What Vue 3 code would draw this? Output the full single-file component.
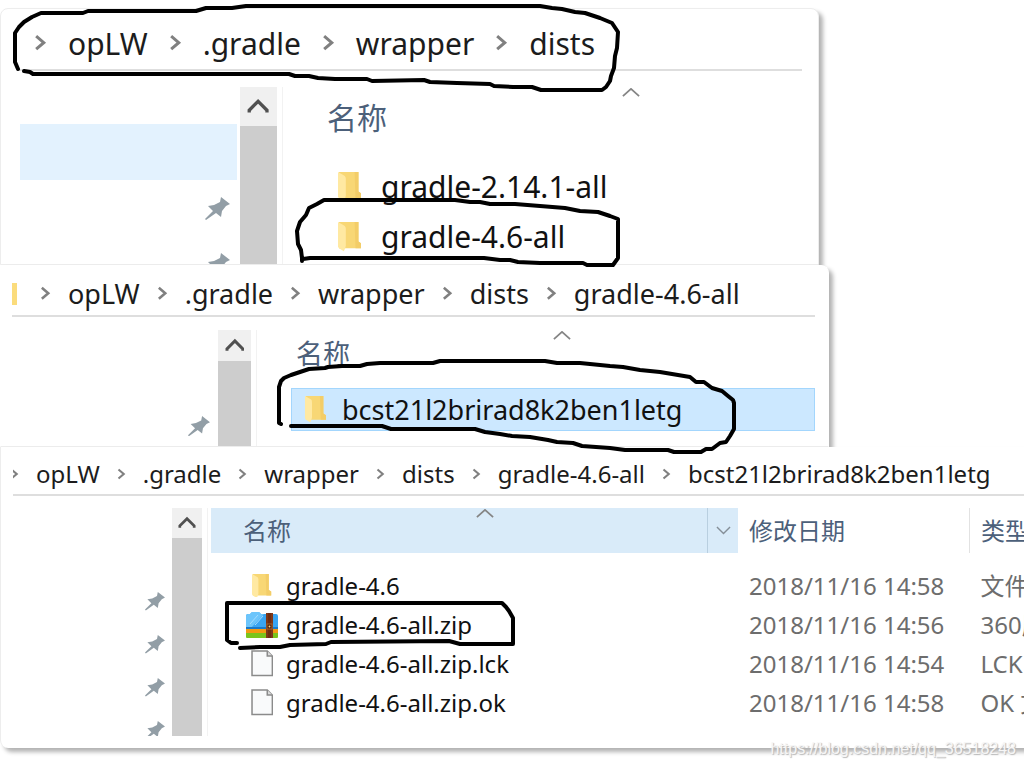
<!--
  Walkthrough of the gradle wrapper folders: three explorer windows stacked on each other, with pen marks over the entries that matter.
-->

<script setup lang="js">
import {ref} from "vue";

const windows = ref([
    {
        name: "dists",
        cutFolder: false,
        path: ["opLW", ".gradle", "wrapper", "dists"],
        pins: [{hover: true, pin: false}, {pin: true}, {pin: true}],
        columns: ["名称"],
        files: [
            {icon: "folder", cells: ["gradle-2.14.1-all"]},
            {icon: "folder", cells: ["gradle-4.6-all"]}
        ]
    },
    {
        name: "version",
        cutFolder: true,
        path: ["opLW", ".gradle", "wrapper", "dists", "gradle-4.6-all"],
        pins: [{pin: true}],
        columns: ["名称"],
        files: [
            {icon: "folder", selected: true, cells: ["bcst21l2brirad8k2ben1letg"]}
        ]
    },
    {
        name: "hash",
        cutFolder: false,
        path: ["opLW", ".gradle", "wrapper", "dists", "gradle-4.6-all", "bcst21l2brirad8k2ben1letg"],
        pins: [{pin: true}, {pin: true}, {pin: true}, {pin: true}],
        columns: ["名称", "修改日期", "类型"],
        files: [
            {icon: "folder", cells: ["gradle-4.6", "2018/11/16 14:58", "文件夹"]},
            {icon: "zip", cells: ["gradle-4.6-all.zip", "2018/11/16 14:56", "360压缩"]},
            {icon: "file", cells: ["gradle-4.6-all.zip.lck", "2018/11/16 14:54", "LCK 文件"]},
            {icon: "file", cells: ["gradle-4.6-all.zip.ok", "2018/11/16 14:58", "OK 文件"]}
        ]
    }
])

// pen strokes, in page coordinates
const marks = [
    "M18 69L15 62V33L19 27L24 22L32 17L41 13H83L88 11H196L206 8H232L246 6H540L552 8L562 9L575 12L585 13L600 18L612 23L618 32L617 48L615 56L614 68L611 76L610 81L606 87L602 90H541L532 87H513L494 86L490 84L457 83L430 82L424 80L372 81L367 79H335L318 78L309 76H295L289 74H40L33 74L30 72L24 71",
    "M302 261V258L301 250L298 244L297 231L300 222L306 215L309 208L317 204L324 200H455L470 202H480L490 204H515L540 206L565 208L580 211L598 212L610 216L618 219V258L613 265H587L583 263L540 263L518 262L510 260H500L484 258H310L303 259",
    "M281 424L279 423V387L281 381L284 378L291 375L297 373L309 369L325 368L328 367L342 366H360L367 364L380 363H433L440 361H545L557 363H580L610 366L623 367L640 370L660 372L690 377L696 382H704L712 388L722 391L728 396L733 400L734 403V429L730 436L726 442L720 443L712 449H706L701 452H674L668 450H625L610 448L582 446L573 443L557 442L548 440L530 437L512 436L500 434L485 432L475 429H391L382 426H291",
    "M237 643H231L227 640V603H502L506 607L509 611L513 618V644H460L449 641L331 642L326 644L290 645L280 647H260L240 648"
]
</script>

<template>
    <main class="page">
        <section v-for="win in windows" :key="win.name" class="window" :class="win.name">
            <nav class="crumbs">
                <span v-if="win.cutFolder" class="cut-folder"></span>
                <template v-for="part in win.path" :key="part">
                    <svg class="chevron" viewBox="0 0 12 16" aria-hidden="true">
                        <path d="M2 2L9 8L2 14"/>
                    </svg>
                    <a href="#">{{ part }}</a>
                </template>
            </nav>
            <div class="body">
                <ul class="tree">
                    <li v-for="(row, index) in win.pins" :key="index" :class="{ 'hover': row.hover }">
                        <svg v-if="row.pin" class="pin" viewBox="0 0 25 23" aria-hidden="true">
                            <path d="M16 0L25 7L21 9L17 14L16 20L11 16L1 23L0 22L8 14L3 9L9 8L15 5Z"/>
                        </svg>
                    </li>
                </ul>
                <div class="scrollbar">
                    <button type="button" aria-label="Scroll up">
                        <svg viewBox="0 0 20 16" aria-hidden="true">
                            <path d="M2 13V11L10 3L18 11V13"/>
                        </svg>
                    </button>
                    <div class="thumb"></div>
                </div>
                <div class="list">
                    <svg class="sort" viewBox="0 0 20 10" aria-hidden="true">
                        <path d="M1 9L10 1L19 9"/>
                    </svg>
                    <table>
                        <thead>
                            <tr>
                                <th v-for="(column, index) in win.columns" :key="column" scope="col">
                                    <div class="head">
                                        <span>{{ column }}</span>
                                        <button v-if="win.columns.length > 1 && index === 0" type="button" aria-label="Filter">
                                            <svg viewBox="0 0 16 10" aria-hidden="true">
                                                <path d="M1 1L8 8L15 1"/>
                                            </svg>
                                        </button>
                                    </div>
                                </th>
                            </tr>
                        </thead>
                        <tbody>
                            <tr v-for="file in win.files" :key="file.cells[0]" :class="{ 'selected': file.selected }">
                                <td v-for="(cell, index) in file.cells" :key="index">
                                    <div v-if="index === 0" class="name">
                                        <span class="icon">
                                            <svg v-if="file.icon === 'folder'" class="folder" viewBox="0 0 24 30" aria-hidden="true">
                                                <path d="M1 0H21V20L24 22V27H5Z" fill="#f8d775"/>
                                                <path d="M17 0H21V20L24 22V27H18Z" fill="#f3cd68"/>
                                                <path d="M0 0L7 4Q8 5 8 7V24Q8 26 6 30L1 27Q0 26 0 25Z" fill="#ffe9a2"/>
                                            </svg>
                                            <svg v-else-if="file.icon === 'zip'" class="zip" viewBox="0 0 32 26" aria-hidden="true">
                                                <rect x="0" y="19" width="32" height="7" rx="1" fill="#7ac41c"/>
                                                <rect x="0" y="15" width="32" height="6" fill="#f39a12"/>
                                                <path d="M0 4Q0 2 2 2H4L6 0H13L15 2H30Q32 2 32 4V17H0Z" fill="#3aa5f2"/>
                                                <path d="M0 4Q0 2 2 2H4L6 0H13L15 2H18L4 17H0Z" fill="#6cc5fb"/>
                                                <path d="M0 15H32V17H0Z" fill="#1b79c8"/>
                                                <path d="M4 12L12 3M9 13L17 4" stroke="#a3dcff"/>
                                                <rect x="20" y="1" width="7" height="25" fill="#6e2d12"/>
                                                <path d="M21 1V26M26 1V26" stroke="#8d4520"/>
                                                <rect x="21" y="12" width="5" height="5" fill="#4a1c0c" stroke="#a8672f"/>
                                                <circle cx="23.5" cy="14.5" r="1" fill="#ffd77a"/>
                                            </svg>
                                            <svg v-else class="file" viewBox="0 0 22 26" aria-hidden="true">
                                                <path d="M1 1H16L21 6V25H1Z" fill="#f9fafb" stroke="#8b8b8b" stroke-width="1.5"/>
                                                <path d="M16 1V6H21" fill="#ddd" stroke="#8b8b8b" stroke-width="1.5"/>
                                            </svg>
                                        </span>
                                        <span>{{ cell }}</span>
                                    </div>
                                    <template v-else>{{ cell }}</template>
                                </td>
                            </tr>
                        </tbody>
                    </table>
                </div>
            </div>
        </section>
        <svg class="marks" viewBox="0 0 1024 768" aria-hidden="true">
            <path v-for="mark in marks" :key="mark" :d="mark"/>
        </svg>
        <p class="watermark">https://blog.csdn.net/qq_36518248</p>
    </main>
</template>

<style>
body {
    margin: 0;
    background: #fff;
}
</style>

<style scoped>
.page {
    position: relative;
    overflow: hidden;
    min-height: 100vh;
    padding-top: 8px;
    box-sizing: border-box;
    font-family: 'Noto Sans', 'Noto Sans CJK SC', sans-serif;
    color: #1c1c1c;
}
.window {
    box-sizing: border-box;
    border: 1px solid #ededed;
    background: #fff;
    box-shadow: 4px 4px 4px rgba(0, 0, 0, 0.3);
    font-size: var(--text);
}
.dists {
    --text: 30px;
    --chevron: 13px;
    --pin: 25px;
    --row: 50px;
    --slot: 39px;
    --gap: 12px;
    --lead: 47px;
    --caret: 339px;
    width: 80%;
    padding: 0 16px 0 17px;
    border-radius: 8px 8px 0 0;
}
.version {
    --text: 27px;
    --chevron: 11px;
    --pin: 22px;
    --row: 43px;
    --slot: 35px;
    --gap: 9px;
    --lead: 7px;
    --caret: 296px;
    width: 81%;
    padding: 0 13px 0 11px;
    border-color: #fff #fff #ededed;
    border-radius: 0 8px 0 0;
}
.hash {
    --text: 24px;
    --chevron: 9px;
    --pin: 20px;
    --row: 39px;
    --slot: 32px;
    --gap: 8px;
    --lead: 35px;
    --caret: 268px;
    padding: 0 0 12px 12px;
    border-width: 0 0 0 1px;
    border-radius: 0 0 0 8px;
}

/* address bar */
.crumbs {
    display: flex;
    align-items: center;
    box-sizing: border-box;
    border-bottom: 2px solid #dedede;
    white-space: nowrap;
    overflow: hidden;
}
.dists .crumbs {
    height: 62px;
    padding: 8px 0 0 16px;
    gap: 21px;
}
.version .crumbs {
    height: 51px;
    padding-top: 6px;
    gap: 17px;
}
.hash .crumbs {
    height: 49px;
    padding-top: 6px;
    gap: 17px;
}
.crumbs a {
    color: inherit;
    text-decoration: none;
}
.chevron {
    flex: none;
    width: var(--chevron);
    fill: none;
    stroke: #808080;
    stroke-width: 2.8;
}
.hash .chevron:first-child {
    margin-left: -3px;
}
.cut-folder {
    width: 5px;
    height: 22px;
    margin-right: 6px;
    background: #fbdc7c;
}

.body {
    display: flex;
    overflow: hidden;
}
.dists .body {
    height: 177px;
    margin-top: 16px;
}
.version .body {
    height: 116px;
    margin-top: 13px;
}
.hash .body {
    height: 228px;
    margin-top: 12px;
}

/* navigation pane */
.tree {
    flex: none;
    box-sizing: border-box;
    margin: 0;
    list-style: none;
}
.tree li {
    display: flex;
    align-items: center;
    justify-content: flex-end;
}
.dists .tree {
    width: 222px;
    padding: 37px 3px 0 2px;
}
.dists .tree li {
    height: 56px;
    padding-right: 7px;
}
.version .tree {
    width: 206px;
    padding: 72px 8px 0 0;
}
.version .tree li {
    height: 48px;
}
.hash .tree {
    width: 159px;
    padding: 72px 7px 0 0;
}
.hash .tree li {
    height: 43px;
}
.tree .hover {
    background: #e3f2fe;
}
.pin {
    width: var(--pin);
    fill: #929ea6;
}

.scrollbar {
    flex: none;
    display: flex;
    flex-direction: column;
}
.scrollbar button {
    display: flex;
    align-items: center;
    justify-content: center;
    padding: 0;
    border: 0;
    background: #f0f0f0;
}
.scrollbar svg {
    width: 60%;
    fill: none;
    stroke: #505050;
    stroke-width: 3;
}
.thumb {
    flex: 1;
    background: #cdcdcd;
}
.dists .scrollbar {
    width: 37px;
}
.dists .scrollbar button {
    height: 39px;
}
.version .scrollbar {
    width: 33px;
}
.version .scrollbar button {
    height: 31px;
}
.hash .scrollbar {
    width: 30px;
}
.hash .scrollbar button {
    height: 30px;
}

/* file list */
.list {
    position: relative;
    flex: 1;
    min-width: 0;
    margin-left: 5px;
    border-left: 1px solid #f2f2f2;
    overflow: hidden;
}
.version .list {
    padding-left: 34px;
}
.hash .list {
    padding-left: 3px;
}
.sort {
    position: absolute;
    top: 1px;
    left: var(--caret);
    width: 18px;
    fill: none;
    stroke: #858585;
    stroke-width: 2;
}
table {
    width: 100%;
    table-layout: fixed;
    border-collapse: collapse;
    line-height: 36px;
    white-space: nowrap;
}
tbody::before {
    content: '';
    display: block;
    height: 13px;
}
.version tbody::before {
    height: 10px;
}
th, td {
    padding: 0;
    text-align: left;
    font-weight: normal;
    overflow: hidden;
}
th {
    color: #4c607a;
}
.head {
    display: flex;
    align-items: center;
    justify-content: space-between;
}
.dists .head {
    height: 62px;
    padding-left: 44px;
}
.version .head {
    height: 48px;
    padding-left: 5px;
}
.hash .head {
    height: 45px;
    padding-left: 11px;
}
.hash th:first-child {
    width: 527px;
    background: #d9ebf9;
}
.hash th:first-child .head {
    padding-left: 32px;
}
.hash th:nth-child(2) {
    width: 231px;
}
.hash th:nth-child(3) {
    border-left: 1px solid #e2e2e2;
}
.head button {
    align-self: stretch;
    width: 31px;
    padding: 0;
    border: 0;
    border-left: 1px solid #b9cfe0;
    background: none;
}
.head button svg {
    width: 15px;
    fill: none;
    stroke: #858f98;
    stroke-width: 1.5;
}
td {
    height: var(--row);
    color: #6d6d6d;
}
td:first-child {
    color: #111;
}
td + td {
    padding-left: 11px;
}
.selected td {
    background: #cce8ff;
    box-shadow: inset 0 0 0 1px #a3d6fd;
}
.name {
    display: flex;
    align-items: center;
    gap: var(--gap);
    padding-left: var(--lead);
}
.icon {
    flex: none;
    display: flex;
    justify-content: center;
    width: var(--slot);
}
.folder {
    width: 60%;
}
.zip {
    width: 100%;
}
.file {
    width: 70%;
}

.marks {
    position: absolute;
    top: 0;
    left: 0;
    width: 1024px;
    height: 768px;
    fill: none;
    stroke: #000;
    stroke-width: 4;
    stroke-linecap: round;
    stroke-linejoin: round;
    pointer-events: none;
}
.watermark {
    position: absolute;
    right: 8px;
    bottom: 9px;
    margin: 0;
    font: 16px/20px 'Liberation Sans', sans-serif;
    color: #f6f6f6;
    text-shadow: 1px 1px 1px #b8b8b8;
}
</style>
